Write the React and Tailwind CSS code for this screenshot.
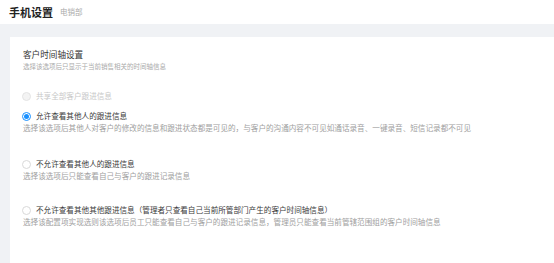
import React from "react";

const font = { fontFamily: '"Noto Sans CJK SC", "Noto Sans", sans-serif' };

function Radio({ checked, disabled }) {
  if (checked) {
    return (
      <span className="w-[9px] h-[9px] rounded-full border border-[#1890ff] flex items-center justify-center shrink-0 bg-white">
        <span className="w-[5px] h-[5px] rounded-full bg-[#1890ff]" />
      </span>
    );
  }
  return (
    <span
      className={
        "w-[9px] h-[9px] rounded-full border shrink-0 " +
        (disabled ? "border-[#e4e4e4] bg-[#f3f3f3]" : "border-[#d9d9d9] bg-white")
      }
    />
  );
}

function Option({ label, desc, checked, disabled, mt }) {
  return (
    <div className={mt}>
      <div className="flex items-center h-[12px] -ml-px">
        <Radio checked={checked} disabled={disabled} />
        <span
          className={
            "ml-[5px] text-[7.6px] leading-[12px] whitespace-nowrap " +
            (disabled ? "text-[#c8c8c8]" : "text-[#3a3a3a]")
          }
        >
          {label}
        </span>
      </div>
      {desc && (
        <div className="text-[7.6px] leading-[10px] text-[#a0a0a0] whitespace-nowrap mt-[1px]">
          {desc}
        </div>
      )}
    </div>
  );
}

export default function App() {
  return (
    <div className="w-[554px] h-[263px] overflow-hidden bg-white flex flex-col" style={font}>
      <div className="h-[24px] flex items-center pl-[9px] bg-white shrink-0">
        <span className="text-[11px] font-bold text-[#222] leading-none">手机设置</span>
        <span className="ml-[7px] text-[7.5px] text-[#aaa] leading-none">电销部</span>
      </div>
      <div className="flex-1 bg-[#f0f2f5] pt-[13px] pl-[10px] flex flex-col">
        <div className="flex-1 bg-white pl-[13px] pt-[11px]">
          <div className="text-[8.6px] leading-[12px] text-[#333]">客户时间轴设置</div>
          <div className="text-[6.5px] leading-[10px] text-[#aaa] mt-[1px] whitespace-nowrap">
            选择该选项后只显示于当前销售相关的时间轴信息
          </div>
          <Option mt="mt-[19px]" label="共享全部客户跟进信息" disabled />
          <Option
            mt="mt-[8px]"
            checked
            label="允许查看其他人的跟进信息"
            desc="选择该选项后其他人对客户的修改的信息和跟进状态都是可见的，与客户的沟通内容不可见如通话录音、一键录音、短信记录都不可见"
          />
          <Option
            mt="mt-[25px]"
            label="不允许查看其他人的跟进信息"
            desc="选择该选项后只能查看自己与客户的跟进记录信息"
          />
          <Option
            mt="mt-[23px]"
            label="不允许查看其他其他跟进信息（管理者只查看自己当前所管部门产生的客户时间轴信息）"
            desc="选择该配置项实现选则该选项后员工只能查看自己与客户的跟进记录信息，管理员只能查看当前管辖范围组的客户时间轴信息"
          />
        </div>
      </div>
    </div>
  );
}
